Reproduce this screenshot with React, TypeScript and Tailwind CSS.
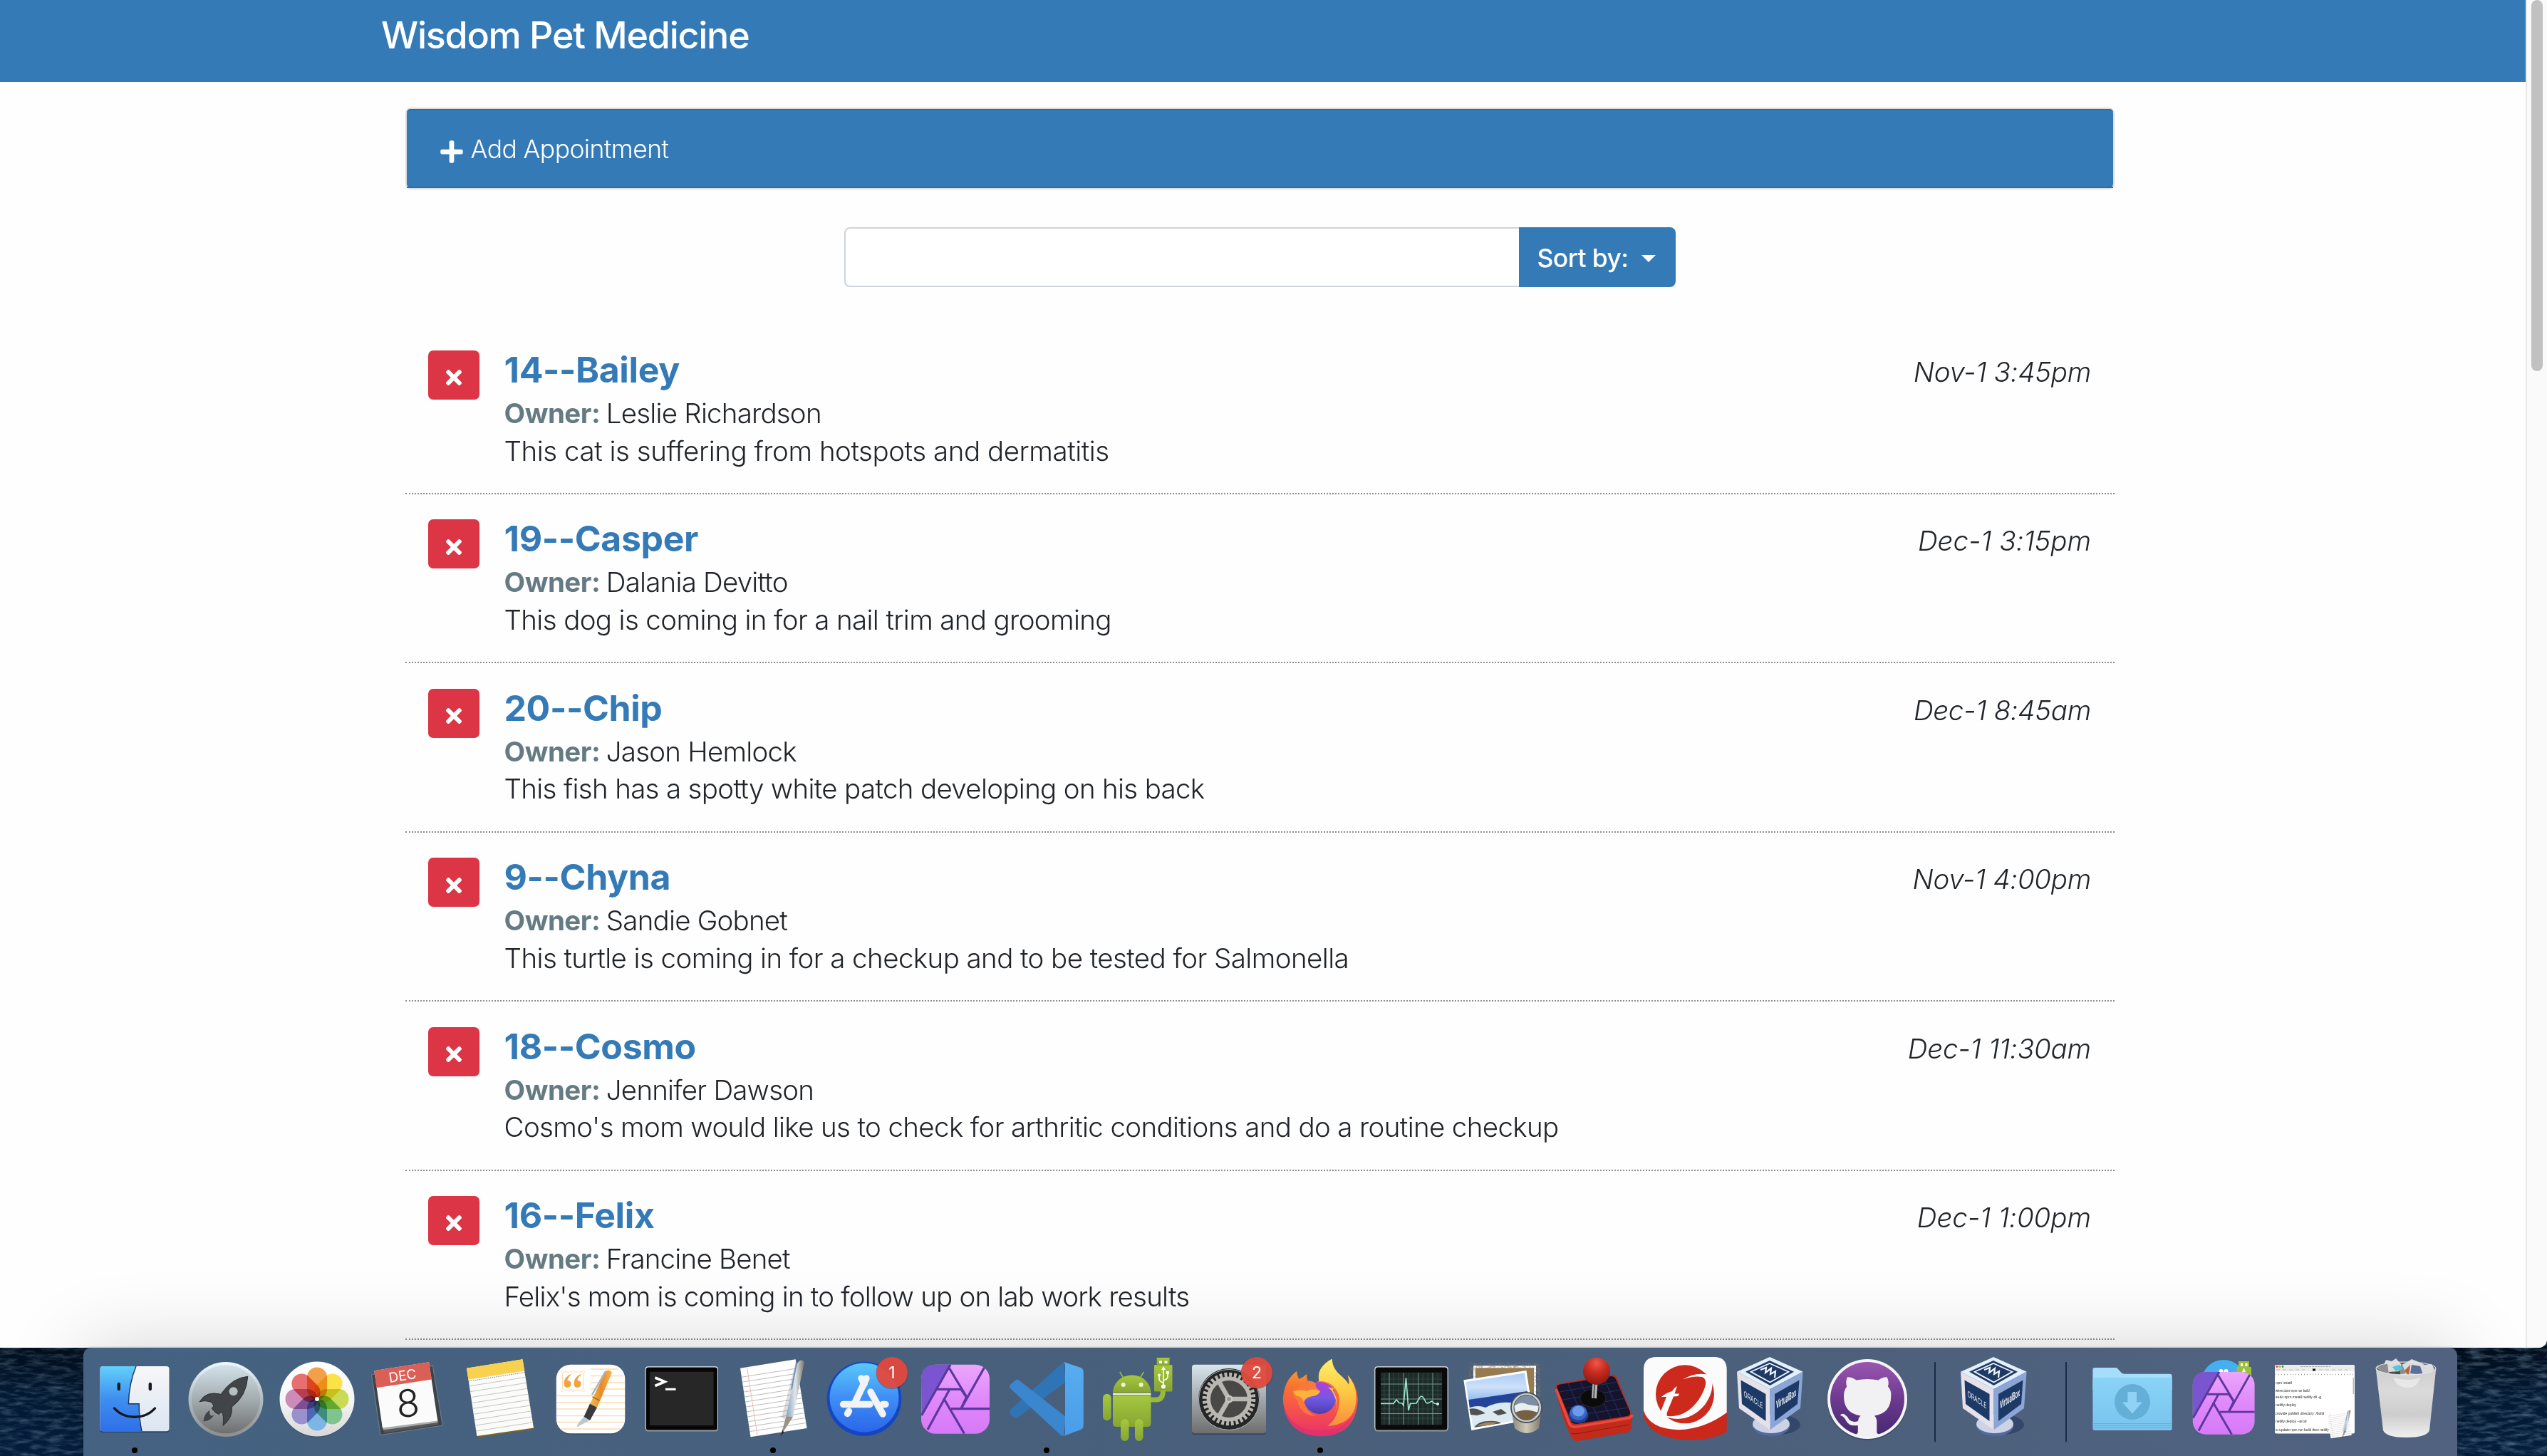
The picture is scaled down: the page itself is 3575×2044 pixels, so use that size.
import React from 'react';
import { FaPlus, FaTimes } from 'react-icons/fa';

type Appointment = { title: string; owner: string; notes: string; date: string; tracking: string; dateTracking: string };

const appointments: Appointment[] = [
  { title: '14--Bailey', owner: 'Leslie Richardson', notes: 'This cat is suffering from hotspots and dermatitis', date: 'Nov-1 3:45pm', tracking: 'tracking-[-0.46px]', dateTracking: 'tracking-[-0.3px]' },
  { title: '19--Casper', owner: 'Dalania Devitto', notes: 'This dog is coming in for a nail trim and grooming', date: 'Dec-1 3:15pm', tracking: 'tracking-[-0.64px]', dateTracking: 'tracking-[-0.05px]' },
  { title: '20--Chip', owner: 'Jason Hemlock', notes: 'This fish has a spotty white patch developing on his back', date: 'Dec-1 8:45am', tracking: 'tracking-[-0.68px]', dateTracking: 'tracking-[-0.3px]' },
  { title: '9--Chyna', owner: 'Sandie Gobnet', notes: 'This turtle is coming in for a checkup and to be tested for Salmonella', date: 'Nov-1 4:00pm', tracking: 'tracking-[-0.58px]', dateTracking: 'tracking-[-0.3px]' },
  { title: '18--Cosmo', owner: 'Jennifer Dawson', notes: "Cosmo's mom would like us to check for arthritic conditions and do a routine checkup", date: 'Dec-1 11:30am', tracking: 'tracking-[-0.64px]', dateTracking: 'tracking-[-0.2px]' },
  { title: '16--Felix', owner: 'Francine Benet', notes: "Felix's mom is coming in to follow up on lab work results", date: 'Dec-1 1:00pm', tracking: 'tracking-[-0.8px]', dateTracking: 'tracking-[-0.05px]' },
];

function AppointmentRow({ item }: { item: Appointment }) {
  return (
    <div className="flex h-[237.4px] shrink-0 items-start border-b-2 border-dotted border-[#8e8e8e] pr-[33px] pl-[32px]">
      <button className="mt-[35.4px] flex h-[69px] w-[71.5px] shrink-0 items-center justify-center rounded-[7px] bg-[#dc3545] text-white">
        <FaTimes className="mt-[8px] text-[32px]" />
      </button>
      <div className="ml-[35px] flex-1 pt-[31.4px] text-[#212529]">
        <div className="text-[50px] leading-[62px] font-bold tracking-[-0.4px] text-[#347ab7]">{item.title}</div>
        <div className="flex gap-[8.5px] text-[38.5px] leading-[61.6px] font-light">
          <span className="font-bold tracking-[-0.5px] text-[#657b83]">Owner:</span>
          <span className="tracking-[-0.8px]">{item.owner}</span>
        </div>
        <div className={`text-[38.5px] leading-[43.6px] font-light whitespace-nowrap ${item.tracking}`}>{item.notes}</div>
      </div>
      <div className={`pt-[34.4px] text-[38.5px] leading-[62px] font-light text-[#212529] italic ${item.dateTracking}`}>{item.date}</div>
    </div>
  );
}

function Cell({ children, running }: { children: React.ReactNode; running?: boolean }) {
  return (
    <svg className="h-[152px] w-[128px] shrink-0 overflow-visible" viewBox="0 0 128 152">
      {children}
      {running && <ellipse cx="64" cy="144" rx="4" ry="4" fill="#000" />}
    </svg>
  );
}

function Badge({ n }: { n: string }) {
  return (
    <g>
      <circle cx="103" cy="35.5" r="22.5" fill="#00000040" />
      <circle cx="103" cy="35" r="22" fill="#e24b3f" fillOpacity="0.95" />
      <text x="103" y="43" textAnchor="middle" fontSize="23" fill="#fff" fontFamily="Inter, sans-serif">{n}</text>
    </g>
  );
}

function Finder() {
  return (
    <Cell running>
      <rect x="15.5" y="27" width="97" height="92" rx="4" fill="#2b4260" />
      <rect x="15.5" y="26" width="97" height="91.3" rx="4" fill="url(#finderR)" />
      <path d="M19.5 26H66Q56 50 55.4 78.7H70.2Q70 98 74 117.3H19.5Q15.5 117.3 15.5 113V30Q15.5 26 19.5 26Z" fill="url(#finderL)" />
      <path d="M66 26Q56 50 55.4 78.7H70.2Q70 98 74 117.3" fill="none" stroke="#1d3350" strokeWidth="1.4" />
      <path d="M41.8 51V58M85.8 51V58" stroke="#1b1b1f" strokeWidth="4.4" strokeLinecap="round" />
      <path d="M35.5 85Q46 97 64 97.3Q82 97 92.5 85" fill="none" stroke="#16191f" strokeWidth="3.4" strokeLinecap="round" />
    </Cell>
  );
}

function Launchpad() {
  return (
    <Cell>
      <circle cx="64" cy="72.5" r="52.5" fill="url(#lpRim)" />
      <circle cx="64" cy="72.3" r="48" fill="url(#lp)" />
      <path d="M94.8 40.3Q73 42 57 65.3Q36 60 27 76Q36 73 44.5 77L47 82L44 85Q49 92 54 93.5L58 90Q62 95 60 109.5Q74 98 72.5 83Q93 68 94.8 40.3Z" fill="#424548" stroke="#2d3032" strokeWidth="1" />
      <circle cx="74.6" cy="61.3" r="6" fill="#b4c0c5" />
      <path d="M41.5 87.5Q33 93 32.6 103.5Q43 103 47.7 94L44 96Q40 94 41.5 87.5Z" fill="#424548" />
    </Cell>
  );
}

const petals = ['#f2a148', '#fbe24a', '#c9da55', '#7fc48c', '#7bb6e4', '#9a90cb', '#cb8cb8', '#e76f70'];

function Photos() {
  return (
    <Cell>
      <circle cx="64" cy="73.5" r="52.5" fill="#2c435e" opacity="0.5" />
      <circle cx="64" cy="72" r="52.5" fill="url(#photoBg)" />
      <g className="isolate">
        {petals.map((c, i) => (
          <rect key={c} x="50" y="27.5" width="28" height="45" rx="14" fill={c} transform={`rotate(${i * 45} 64 72)`} className="mix-blend-multiply" />
        ))}
      </g>
      <circle cx="64" cy="72" r="3" fill="#fff" />
    </Cell>
  );
}

function Calendar() {
  return (
    <Cell>
      <path d="M12.6 38L98.4 25.3L112.2 109L25 122.5Z" fill="#3c434a" stroke="#707a82" strokeWidth="1.2" />
      <path d="M28.2 112L105.3 102L106 108L30.5 119.5Z" fill="#55585a" />
      <path d="M27.5 108L105 98.5L105.5 105L28.8 115.5Z" fill="#a9abac" />
      <path d="M16.3 32.3L93 20.3L105.3 102.5L27.8 112.5Z" fill="#fbfbfb" />
      <path d="M16.3 32.3L93 20.3L97 44.5L19.3 56.3Z" fill="#da5f56" />
      <text x="56" y="46" textAnchor="middle" fontSize="19" fill="#fff" fontFamily="Inter, sans-serif" transform="rotate(-9 56 40)">DEC</text>
      <text x="63.5" y="97" textAnchor="middle" fontSize="53" fill="#222" fontWeight="300" fontFamily="Inter, sans-serif" transform="rotate(-4 63.5 78)">8</text>
    </Cell>
  );
}

const tilted = (t: number) => ({ x1: 18 + 14.4 * t, y1: 28.7 + 96.5 * t, x2: 96.5 + 15.5 * t, y2: 16.3 + 96.7 * t });

function PaperLines({ from, step, n, color }: { from: number; step: number; n: number; color: string }) {
  return (
    <g stroke={color} strokeWidth="1">
      {Array.from({ length: n }, (_, i) => <line key={i} {...tilted(from + i * step)} />)}
    </g>
  );
}

function Notes() {
  return (
    <Cell>
      <path d="M18.5 31L97 18L112.5 114.5L32.8 126Z" fill="#7a6420" />
      <path d="M18 28.7L96.5 16.3L112 112.5L32.4 124Z" fill="#fbfbfa" />
      <PaperLines from={0.26} step={0.082} n={9} color="#c4c4c4" />
      <path d="M18 28.7L96.5 16.3L99.3 32.5L20.5 44.7Z" fill="#f8d24f" />
      <path d="M21 47L99.5 34.5" stroke="#777" strokeWidth="1" strokeDasharray="1.5 1.5" />
    </Cell>
  );
}

function Pages() {
  return (
    <Cell>
      <rect x="15.8" y="25" width="96.5" height="97" rx="21" fill="#2c435e" opacity="0.5" />
      <rect x="15.8" y="23.7" width="96.5" height="96.6" rx="20" fill="#fff" />
      <g stroke="#fbdcae" strokeWidth="1.6">
        <path d="M64 30H103M64 39.5H110M64 49H112M64 58H112M16 67.5H112M16 77H112M16 86H112M16 95.5H112M17 104.5H111M22 114H106" />
        <rect x="24.5" y="34" width="29" height="26" fill="#fff" strokeWidth="1" />
        <g fill="#fff" strokeWidth="0.8">
          <circle cx="24.5" cy="34" r="2" /><circle cx="53.5" cy="34" r="2" /><circle cx="24.5" cy="60" r="2" /><circle cx="53.5" cy="60" r="2" /><circle cx="39" cy="34" r="1.8" /><circle cx="39" cy="60" r="1.8" />
        </g>
      </g>
      <g fill="#f0a440">
        <path d="M36.5 37Q26.5 41 26.5 50Q26.5 56 31.5 56Q36.5 55.5 36.5 50.5Q36.5 46 31.5 46Q32 41 36.5 38.5Z" />
        <path d="M50.5 37Q40.5 41 40.5 50Q40.5 56 45.5 56Q50.5 55.5 50.5 50.5Q50.5 46 45.5 46Q46 41 50.5 38.5Z" />
      </g>
      <path d="M54 108L96 44L60 98Z" fill="#00000022" />
      <path d="M85 33Q90 29 94 35L73 84L63 79Z" fill="url(#penO)" />
      <path d="M85 33L66 66" stroke="#9ab7cc" strokeWidth="2.4" />
      <path d="M63 78.5L73 84L63 102L54.5 97Z" fill="#3a3a3c" />
      <path d="M54.5 97L62.5 102L44.4 111.5L46 107Z" fill="#b9c8d2" />
      <path d="M66.5 69L76.5 74" stroke="#a86a1c" strokeWidth="1.5" />
    </Cell>
  );
}

function Terminal() {
  return (
    <Cell>
      <rect x="12.7" y="27" width="102.3" height="90.5" rx="4" fill="#8f989e" />
      <rect x="12.7" y="26.3" width="102.3" height="89" rx="4" fill="#e9eef0" />
      <rect x="13.7" y="27.6" width="100.3" height="88" rx="3.5" fill="#060606" />
      <rect x="19" y="33.7" width="89.6" height="75.5" fill="#272727" />
      <path d="M26.5 42L40 47.7L26.5 53.5" fill="none" stroke="#fff" strokeWidth="3.6" />
      <path d="M41 58.3H55.6" stroke="#fff" strokeWidth="3" />
    </Cell>
  );
}

function TextEditArt() {
  return (
    <g>
      <path d="M18 28.7L95.7 16.3L111.6 113L32.5 125.3Z" fill="#fff" />
      <PaperLines from={0.13} step={0.072} n={12} color="#bcbcbc" />
      <path d="M27.5 27.5L42 123" stroke="#f3b9b4" strokeWidth="1" />
      <path d="M96 20L107 20L87 104L76 98Z" fill="#00000022" />
      <path d="M98 22Q103 14 108 20L92 97L82.5 96Z" fill="url(#penS)" />
      <path d="M97 22L90 58" stroke="#6f96b8" strokeWidth="2" />
      <path d="M82.5 96L92 97L76.5 121L74.5 125Z" fill="#9a9188" />
      <path d="M77.5 115L74.5 125L79 119Z" fill="#222" />
    </g>
  );
}

function AppStore() {
  return (
    <Cell>
      <circle cx="64" cy="71.7" r="52.3" fill="#1446c4" />
      <circle cx="64" cy="70" r="48.5" fill="url(#appstore)" />
      <g stroke="#f2f3f5" strokeWidth="9.5" strokeLinecap="round" fill="none">
        <path d="M34.5 79.5H72M90 79.5H94" />
        <path d="M67 43L51 77" />
        <path d="M60 43L64 51" />
        <path d="M73 62L90 93" />
        <path d="M42.5 89L40.5 92.5" />
      </g>
      <Badge n="1" />
    </Cell>
  );
}

function AffinityArt() {
  return (
    <g>
      <rect x="16" y="23.7" width="96" height="97" rx="20" fill="url(#aff)" />
      <path d="M36 23.7H57L16.5 95L16 44Q16 23.7 36 23.7Z" fill="#7a55cf" />
      <g stroke="#5b379f" strokeWidth="3.2" fill="none">
        <path d="M57 23.7L16.5 95" />
        <path d="M55 28L80 69.5" />
        <path d="M104.5 28L72 85.5" />
        <path d="M38.5 58.3H72" />
        <path d="M56 58.3L25 115" />
        <path d="M47.5 71L76.5 120.5" />
        <path d="M58 85.7H112" />
        <path d="M72 58.3L79.5 69.5L72 85.5" />
      </g>
    </g>
  );
}

function VSCode() {
  return (
    <Cell running>
      <path d="M88 20L91 48L22 99Q18 100 12.5 92Q11 89 14 86Z" fill="#2f74b5" />
      <path d="M14 51L21.5 44.7Q24 44 27 47L91 97L88 124Q85 124 82 121L13 57Q11 54 14 51Z" fill="#3a86cf" />
      <path d="M88 20L112 28Q115.8 30 115.8 34V109Q115.8 113 112 115L88 124Q90 123 90 118V26Q90 22 88 20Z" fill="url(#vsc)" />
    </Cell>
  );
}

function AndroidArt() {
  return (
    <g>
      <g fill="url(#droid)">
        <path d="M29 63.5A26.7 25 0 0 1 82.5 63.5Z" />
        <path d="M29 66.5H82.5V106Q82.5 111 77.5 111H34Q29 111 29 106Z" />
        <rect x="15" y="64.7" width="11.6" height="37.5" rx="5.8" />
        <rect x="40" y="100" width="11.5" height="31" rx="5.7" />
        <rect x="60" y="100" width="11.5" height="31" rx="5.7" />
        <rect x="87" y="24" width="25.5" height="37.5" rx="1.5" />
        <path d="M90.7 14H108.6V25H90.7Z" />
      </g>
      <path d="M29 65H82.5" stroke="#f3f3f3" strokeWidth="2.2" />
      <path d="M82 73H90Q99.5 73 99.5 60" fill="none" stroke="#98b93a" strokeWidth="7" />
      <path d="M38.8 34L43.7 42M72.3 34L67.5 42" stroke="#9cbf3b" strokeWidth="1.6" />
      <circle cx="43.7" cy="52" r="3" fill="#eef3dc" />
      <circle cx="68.6" cy="52" r="3" fill="#eef3dc" />
      <path d="M94 18.5H98V22H94ZM101.5 18.5H105.5V22H101.5Z" fill="#fff" />
      <path d="M100 54V29M94 39V44Q94 47 100 49.5M106 36V41Q106 44 100 46" fill="none" stroke="#fff" strokeWidth="1.6" />
      <path d="M97 31L100 26L103 31Z" fill="#fff" />
      <circle cx="100" cy="54.5" r="3" fill="#fff" />
      <circle cx="94" cy="38.5" r="2" fill="#fff" />
      <rect x="104" y="33" width="4" height="4" fill="#fff" />
    </g>
  );
}

function Settings() {
  return (
    <Cell>
      <rect x="12" y="25" width="104" height="97" rx="4" fill="#24364c" opacity="0.6" />
      <rect x="12" y="23.7" width="104" height="96.6" rx="4" fill="url(#setBg)" />
      <circle cx="64" cy="72" r="43" fill="#262626" />
      <circle cx="64" cy="73" r="42.5" fill="none" stroke="#a9b4bd" strokeWidth="1" />
      <circle cx="64" cy="72" r="33.8" fill="none" stroke="#b9b5b0" strokeWidth="7" strokeDasharray="3.8 2.836" />
      <circle cx="64" cy="72" r="28.7" fill="#4a4846" stroke="#bab6b2" strokeWidth="5.5" />
      <g stroke="#bab6b2" strokeWidth="6.5">
        <path d="M64 72H91M64 72L50.5 48.6M64 72L50.5 95.4" />
      </g>
      <circle cx="64" cy="72" r="5.5" fill="#c9c6c3" />
      <circle cx="64" cy="72" r="3" fill="#9a9895" />
      <Badge n="2" />
    </Cell>
  );
}

function Firefox() {
  return (
    <Cell running>
      <path d="M31 33Q32 40 34 44Q40 42 45 37Q45 43 46.5 46.5Q54 47 58 50L62 46Q61 26 80.5 15.7Q81 30 94 40Q101 46 104.5 52Q105 44 102.5 38.5Q117 54 116.7 75Q113 124 64 124.3Q14 122 11.8 72Q13 46 31 33Z" fill="url(#ff)" />
      <path d="M12.5 80Q22 116 64 116.5Q98 116 112 92Q100 124 64 124.3Q18 122 12.5 80Z" fill="#e0306f" opacity="0.75" />
      <path d="M80.500 15.700Q58 28 62.500 47Q82 46 90 66Q93 80 86 96Q82 104 74 110Q106 108 113 84Q116.500 68 112 54Q108 44 102.500 38.500Q105 44 104.500 52Q101 46 94 40Q81 30 80.500 15.700Z" fill="url(#ffy)" />
      <circle cx="63.5" cy="70.5" r="22.5" fill="url(#globe)" />
      <path d="M42 48Q50 44 58 50Q56 55 64 61Q62 67 53 68Q44 69 41 76Q44 90 58 96Q36 94 32 74Q28 70 26 66Q30 58 42 48Z" fill="#f9793a" />
      <path d="M26 61Q36 58 45 61Q56 56 64 61.5Q61 67 53 68Q44 69 41 76Q38 68 32 68Q27 66 26 61Z" fill="#fdb23e" />
      <path d="M74 55L85 58Q81 57 82 60Q92 76 84 92Q90 80 84 68Q80 58 74 55Z" fill="#fcc13f" />
    </Cell>
  );
}

function Activity() {
  return (
    <Cell>
      <rect x="12.4" y="27" width="103.2" height="90.5" rx="4" fill="#8f989e" />
      <rect x="12.4" y="26.3" width="103.2" height="89" rx="4" fill="#e9eef0" />
      <rect x="13.4" y="27.6" width="101.2" height="88" rx="3.5" fill="#0a0a0a" />
      <rect x="21" y="34.7" width="86" height="73.6" fill="#1e2b28" />
      <path d="M26 35V108M39 35V108M46 35V108M60 35V108M67 35V108M80 35V108M87 35V108M101 35V108M21 44H107M21 60.5H107M21 66H107M21 86H107M21 99H107" stroke="#33504a" strokeWidth="0.7" />
      <path d="M33 35V108M53 35V108M73.5 35V108M94 35V108M21 51H107M21 72H107M21 92.5H107" stroke="#6f998d" strokeWidth="1" />
      <path d="M21 78.3H39L43 73L47 77.5L51 78L53 81L56.5 42.5L60 88L62.5 78.3L71 78L74 73Q78.5 63 83 74Q85 79 88 77.5L92.8 75L96 78L101 79" fill="none" stroke="#9be3cd" strokeWidth="1.7" />
      <circle cx="101" cy="79" r="2" fill="#cffbee" />
    </Cell>
  );
}

function Preview() {
  return (
    <Cell>
      <rect x="23" y="25.3" width="88" height="70" fill="#fff" />
      <rect x="26" y="28.3" width="82" height="64" fill="#9a7b4c" />
      <rect x="26" y="28.3" width="82" height="64" filter="url(#sand)" opacity="0.7" />
      <path d="M9.3 45.3L97.4 32L108 100L20.3 116Z" fill="#fff" />
      <path d="M12.3 48L95 35.5L99 62L16.5 75Z" fill="url(#sky)" />
      <path d="M16.3 73L98.8 61L101 76L18.5 90Z" fill="#24449a" />
      <path d="M18 84Q30 80 40 84Q60 74 80 78L101 74L104.5 98L22.5 112.5Z" fill="#dbe9f1" />
      <path d="M17.5 86Q26 84 33 88L40 92L28 95L19 94ZM24 112Q30 103 44 103Q56 102 62 106ZM50 90L62 86L70 92L58 95Z" fill="#51504f" />
      <path d="M28 110Q40 102 58 105L45 109Z" fill="#a3835b" />
      <path d="M76 86L81 113Q98 127 115 113L119 84Z" fill="url(#barrel)" />
      <ellipse cx="97.5" cy="84" rx="21.5" ry="21" fill="#c9ced2" stroke="#4c5054" strokeWidth="1.8" />
      <ellipse cx="97.5" cy="84" rx="17.5" ry="17.5" fill="#7c8fa2" stroke="#55595d" strokeWidth="1" />
      <path d="M80.5 82Q90 74 100 80L114.5 82Q114 87 113 90Q98 94 82 90Z" fill="#e9eef2" />
      <path d="M82 91Q96 84 113 91Q107 101 97.5 101.5Q87 101 82 91Z" fill="#75613f" />
    </Cell>
  );
}

function Joystick() {
  return (
    <Cell>
      <path d="M11 58Q9 52 16 50L90 38Q95 38 97 43L118 95L117 112Q116 118 110 119L42 131Q35 131 32 125Q16 90 11 58Z" fill="#c22a1c" />
      <path d="M11 58L30 107Q33 112 40 111L112 99Q117 98 118 94" fill="none" stroke="#ec4a3d" strokeWidth="3.5" />
      <path d="M32 120L38 121L114 108" fill="none" stroke="#8c180f" strokeWidth="0.9" />
      <path d="M12.5 56Q12 52 17 51.5L88 40Q93 40 95 44L115 90Q116 95 111 96L40 107Q34 107 32 103Z" fill="#16142c" />
      <path d="M16 62L98 48M21 73L103 59M26 85L108 71M31 96L113 84M28 50L52 105M45 47L72 102M62 44L88 99M78 42L102 97" stroke="#20356b" strokeWidth="0.9" />
      <ellipse cx="63" cy="71" rx="18" ry="12.5" fill="#0b0b0b" stroke="#262626" strokeWidth="1" />
      <path d="M64.5 71L66 48" stroke="#b5b5b5" strokeWidth="7" />
      <path d="M64 71L65.5 48" stroke="#5b5b5b" strokeWidth="2" />
      <circle cx="68" cy="33" r="19" fill="url(#ball)" />
      <ellipse cx="42.5" cy="95" rx="14" ry="10.5" fill="#1e3f92" />
      <ellipse cx="42.5" cy="91" rx="12" ry="10.5" fill="#3a66c8" />
      <ellipse cx="42.5" cy="89" rx="8.5" ry="7.5" fill="#6d9be8" />
    </Cell>
  );
}

function Trend() {
  return (
    <Cell>
      <path d="M6 84V95Q14 128 71 129.7Q104 129 122.7 118V84Z" fill="#c9281b" />
      <path d="M6 31Q6 13 24 13H105Q122.7 13 122.7 31V91Q92 114 55 115.3Q14 114 6 88Z" fill="#fbfbfb" />
      <circle cx="64" cy="65.3" r="41" fill="#cb2a1c" />
      <path d="M61 44.5Q78 34 95 37.5L101 44Q106 60 92 80Q70 106 40 98Q36 99 33 97L27 89L40 96Q66 98 84 72Q100 46 88 41Q76 39 61 44.5Z" fill="#fbfbfb" />
      <path d="M53 54Q49 56 46 61Q38 63 31 69H38L29 92L40 99Q37 94 40 88L48 68.5L54.5 68L56 64.5H49.5Z" fill="#fbfbfb" />
    </Cell>
  );
}

function VirtualBox() {
  return (
    <Cell>
      <ellipse cx="66" cy="108" rx="32" ry="14" fill="#142a55" opacity="0.45" />
      <ellipse cx="57" cy="110" rx="26" ry="14" fill="#54699f" />
      <ellipse cx="57" cy="107" rx="26" ry="13" fill="#cdd3e6" />
      <path d="M55 13L101.6 33.7L55.5 58L9 33.7Z" fill="#e3effa" />
      <path d="M9 33.7L55.5 58V115.3L12 85Z" fill="#e4e1ea" />
      <path d="M101.6 33.7L55.5 58V115.3L98 85Z" fill="#8ba5d6" />
      <path d="M55 18L89 33.7L55.5 53L21 33.7Z" fill="#1d3a66" />
      <path d="M55 22L81.5 33.8L55.5 48.5L28.5 33.8Z" fill="none" stroke="#f2f6fb" strokeWidth="1.8" />
      <path d="M42 31L50 28L49 35L57 29L56 37L63 33L62 42" fill="none" stroke="#f2f6fb" strokeWidth="2.2" />
      <path d="M14.5 45.5L49.5 65V103L16 79Z" fill="#1d3a66" />
      <path d="M96.5 45.5L62 65V103L94 79Z" fill="#1d3a66" />
      <text fontSize="11" fill="#e9eef5" textLength="42" lengthAdjust="spacingAndGlyphs" fontFamily="Inter, sans-serif" transform="matrix(0.640 0.420 0 1 18.500 68)">ORACLE</text>
      <text fontSize="15" fontWeight="700" fill="#e9eef5" textLength="44" lengthAdjust="spacingAndGlyphs" fontFamily="Inter, sans-serif" transform="matrix(0.640 -0.420 0 1 64 86)">VirtualBox</text>
    </Cell>
  );
}

function GitHub() {
  return (
    <Cell>
      <circle cx="64" cy="73" r="56.5" fill="#24364c" opacity="0.5" />
      <circle cx="64" cy="72" r="56" fill="#f5f5f5" />
      <circle cx="64" cy="72" r="52" fill="url(#gh)" />
      <path d="M36 41.3Q42 41 48.5 45.5Q64 42.5 79.5 45.5Q86 41 91.6 41.3Q95 48 93 54.7Q98 59 97.3 68Q97 92 74 95.5Q77.5 99 77.3 104V119Q78 121 81 122Q64 128 47 122Q50.5 121 50.8 118V109Q38 111 34 102Q31 96 25.9 95Q28 91.5 32 93.5Q36 96 38.5 101Q43 105.5 51 103Q51.5 98 54.4 95.5Q31 92 31 68Q31 59 35.2 54.7Q33 48 36 41.3Z" fill="#f1f0f2" />
    </Cell>
  );
}

function DownloadsFolder() {
  return (
    <Cell>
      <path d="M8.4 31Q8.4 28 11 28H40Q43 28 44 30L48.5 35Q50 36.7 53 36.7H116Q119.7 36.7 119.7 40V60H8.4Z" fill="#a5defa" />
      <path d="M8.4 45Q8.4 42 11.5 42H116.5Q119.7 42 119.7 45V113Q119.7 116 116.5 116H11.5Q8.4 116 8.4 113Z" fill="url(#folder)" />
      <path d="M8.4 106.5H119.7M8.4 109.5H119.7M8.4 112.5H119.7" stroke="#61aeda" strokeWidth="0.9" />
      <circle cx="64" cy="76" r="25" fill="#64afd8" />
      <path d="M57.5 62H70V76.5H78L64 92.5L50 76.5H57.5Z" fill="#8fd2f6" />
    </Cell>
  );
}

function AffinityStack() {
  return (
    <Cell>
      <circle cx="64" cy="48" r="31" fill="#45aff0" />
      <circle cx="60.5" cy="33" r="3" fill="#fff" /><circle cx="67.5" cy="33" r="3" fill="#fff" />
      <path d="M82.5 27H85V19H100V27H103V45H82.5Z" fill="#9dc03b" />
      <path d="M88 22H91V26H88ZM94.5 22H97.5V26H94.5ZM90 34L92.5 28L95 34Z" fill="#fff" />
      <g transform="translate(6.340 12.600) scale(0.904)"><AffinityArt /></g>
    </Cell>
  );
}

const noteLines: [number, string][] = [[50.5, 'npm install'], [62, 'when done npm run build'], [70.5, 'sudo npm install netlify-cli -g'], [82, 'netlify deploy'], [93.5, 'provide publish directory ./build'], [105, 'netlify deploy --prod'], [116.5, 'to update npm run build then netlify d']];

function NoteWindow() {
  return (
    <Cell>
      <rect x="8" y="24" width="112" height="96.5" rx="2" fill="#fff" />
      <rect x="8" y="24" width="112" height="9" rx="2" fill="#ececec" />
      <circle cx="11" cy="26.5" r="1.4" fill="#e0443e" /><circle cx="15" cy="26.5" r="1.4" fill="#dea123" /><circle cx="19" cy="26.5" r="1.4" fill="#1aab29" />
      <path d="M44 26.5H86" stroke="#a7a7a7" strokeWidth="1" strokeDasharray="3 1" />
      <path d="M10 31H50M70 31H110" stroke="#bdbdbd" strokeWidth="1" strokeDasharray="5 4" />
      <rect x="61" y="29.5" width="4" height="3" fill="#111" />
      <path d="M9 37.5H118" stroke="#999" strokeWidth="1.4" strokeDasharray="1 3" />
      <rect x="117.5" y="42" width="1.5" height="23" fill="#b9b9b9" />
      {noteLines.map(([y, s]) => (
        <text key={s} x="9" y={y} fontSize="5.600" fill="#222" textLength={s.length * 2.07} lengthAdjust="spacingAndGlyphs" fontFamily="Liberation Sans, sans-serif">{s}</text>
      ))}
      <g transform="translate(74.500 81) scale(0.370)"><TextEditArt /></g>
    </Cell>
  );
}

function Trash() {
  return (
    <Cell>
      <path d="M22 27L33 24L36 17L44 19L50 15L58 24L66 20L72 16L82 20L90 24L100 23L104 30L92 42L40 42Z" fill="#dcdcdc" />
      <path d="M24 27L38 22L40 38L30 36ZM58 22L64 36L52 38Z" fill="#8d8d8d" />
      <path d="M45 27L55 24L60 30L50 33Z" fill="#54c4d8" />
      <path d="M72 24L84 26L88 38L70 36Z" fill="#5b6f9a" />
      <path d="M62 32L70 24L68 40Z" fill="#b5643d" />
      <path d="M40 34L56 33L56 40L42 40Z" fill="#4e4a48" />
      <path d="M21.7 29Q30 38 64 38Q98 38 106.3 29L97 116Q94 126 64 126Q36 126 32 116Z" fill="url(#trash)" />
      <path d="M46 42Q70 48 84 42Q80 58 62 56Q50 54 46 42Z" fill="#f3f3f3" opacity="0.6" />
      <ellipse cx="64" cy="29" rx="42" ry="9" fill="none" stroke="#e9e9e9" strokeWidth="1.3" strokeOpacity="0.8" />
    </Cell>
  );
}

function Grad({ id, stops, horizontal }: { id: string; stops: string[]; horizontal?: boolean }) {
  return (
    <linearGradient id={id} x1="0" y1="0" x2={horizontal ? 1 : 0} y2={horizontal ? 0 : 1}>
      {stops.map((c, i) => <stop key={i} offset={i / (stops.length - 1)} stopColor={c} />)}
    </linearGradient>
  );
}

function SharedDefs() {
  return (
    <svg className="absolute h-0 w-0">
      <defs>
        <Grad id="finderL" stops={['#62d0fb', '#3f8ff0', '#2f6fe8']} />
        <Grad id="finderR" stops={['#f7f7f8', '#dbe5f2']} />
        <Grad id="lpRim" stops={['#eefaff', '#b0bcc2', '#8d8d8d']} />
        <Grad id="lp" stops={['#d2e2ea', '#a4adb0', '#6f6f6f']} />
        <Grad id="photoBg" stops={['#ffffff', '#f6f6f6', '#d8d8d8']} />
        <Grad id="penO" stops={['#f7c04e', '#e8892c', '#f7b548']} horizontal />
        <Grad id="penS" stops={['#7fa3bf', '#dfe6ec', '#7c7468']} horizontal />
        <Grad id="appstore" stops={['#5ac8fa', '#3f8ef5', '#2a66ea']} />
        <Grad id="aff" stops={['#eba6fb', '#e089fa', '#d679f8']} />
        <Grad id="vsc" stops={['#57aef0', '#4a9ce8']} />
        <Grad id="droid" stops={['#a6c83f', '#86a532']} />
        <Grad id="setBg" stops={['#d8e6ee', '#a4a8aa', '#6f6e6d']} />
        <Grad id="ff" stops={['#f9b13c', '#f9762f', '#f5504e', '#e8306a']} />
        <Grad id="ffy" stops={['#fff06a', '#fdc843', '#f98b3a']} />
        <Grad id="globe" stops={['#b33fd6', '#7558e6', '#4a3fae']} />
        <Grad id="sky" stops={['#a9cdf7', '#cde0f9', '#8db8ee']} />
        <Grad id="barrel" stops={['#8b8578', '#cfc9b8', '#7c7566']} horizontal />
        <Grad id="gh" stops={['#9a56b0', '#6d3a90', '#45286f']} />
        <Grad id="folder" stops={['#8ad3f7', '#78c4ef']} />
        <Grad id="trash" stops={['#cfcfcf', '#dadada', '#cdcdcd', '#f0f0f0']} />
        <radialGradient id="ball" cx="0.5" cy="0.2" r="0.9">
          <stop offset="0" stopColor="#f0564a" /><stop offset="0.4" stopColor="#c92c20" /><stop offset="1" stopColor="#7c140d" />
        </radialGradient>
        <filter id="sand">
          <feTurbulence type="fractalNoise" baseFrequency="0.350" numOctaves="2" seed="4" />
          <feColorMatrix values="0 0 0 0 0.250  0 0 0 0 0.200  0 0 0 0 0.120  2.500 0 0 0 -1" />
        </filter>
      </defs>
    </svg>
  );
}

function Ocean() {
  return (
    <svg className="absolute inset-x-0 bottom-0 h-[170px] w-full">
      <defs>
        <filter id="waves" x="0" y="0" width="100%" height="100%">
          <feTurbulence type="fractalNoise" baseFrequency="0.045 0.180" numOctaves="4" seed="7" />
          <feColorMatrix values="0 0 0 0 0.200  0 0 0 0 0.340  0 0 0 0 0.460  1.500 0 0 0 -0.620" />
        </filter>
        <Grad id="sea" stops={['#020b17', '#041a34', '#051e3d']} />
      </defs>
      <rect width="100%" height="100%" fill="url(#sea)" />
      <rect width="130" height="100%" filter="url(#waves)" opacity="0.6" />
      <rect x="3440" width="140" height="100%" filter="url(#waves)" opacity="0.75" />
    </svg>
  );
}

function DockDivider({ shift }: { shift: string }) {
  return (
    <div className="flex h-[152px] w-[58px] shrink-0 justify-center pt-[20px]">
      <div className={`h-[112px] w-[2px] bg-[#1a2c47] ${shift}`} />
    </div>
  );
}

export default function App() {
  return (
    <div className="relative flex h-[2044px] w-[3575px] flex-col overflow-hidden bg-[#04162c] font-['Inter',sans-serif]">
      <SharedDefs />
      <Ocean />

      <div className="relative flex h-[1892px] shrink-0 overflow-hidden rounded-br-[12px] bg-[#fefefe]">
        <main className="flex flex-1 flex-col">
          <header className="h-[115px] shrink-0 bg-[#347ab7] pl-[535px]">
            <h1 className="pt-[19.5px] text-[52px] leading-[60px] font-medium tracking-[-1.25px] text-white">Wisdom Pet Medicine</h1>
          </header>

          <div className="mt-[36px] ml-[569px] flex w-[2399px] flex-col">
            <div className="flex h-[115px] shrink-0 rounded-[8px] border-2 border-[#dcdddd] bg-[#347ab7]">
              <div className="flex flex-1 items-center rounded-t-[5px] border-y-2 border-[#2f6ea5] pl-[44.5px] text-white">
                <FaPlus className="mt-[8px] text-[36px]" />
                <span className="mt-[2px] ml-[9px] text-[35.5px] leading-[44px] font-light tracking-[-0.6px]">Add Appointment</span>
              </div>
            </div>

            <div className="mt-[53px] ml-[616px] flex h-[84px] w-[1166.5px] shrink-0">
              <input className="h-full min-w-0 flex-1 rounded-l-[8px] border-2 border-r-0 border-[#ced4da] bg-white outline-none" />
              <button className="flex h-full w-[220px] items-center rounded-r-[8px] bg-[#347ab7] pt-[3px] pl-[26px] text-[35.5px] font-medium tracking-[-0.6px] text-white">
                Sort by:
                <span className="ml-[19px] border-x-[10px] border-t-[10px] border-x-transparent border-t-white" />
              </button>
            </div>

            <div className="mt-[53.6px] flex flex-col">
              {appointments.map((a) => <AppointmentRow key={a.title} item={a} />)}
            </div>
          </div>
        </main>
        <aside className="w-[30px] shrink-0 border-l-2 border-[#e8e8e8] bg-[#fafafa] pl-[6px]">
          <div className="h-[521px] w-[16px] rounded-[8px] bg-[#c1c1c1]" />
        </aside>
      </div>

      <nav className="relative ml-[117px] flex h-[152px] w-[3332px] shrink-0 rounded-t-[11px] bg-linear-to-r from-[#456282] via-[#495f7a] to-[#50627f] px-[8px] shadow-[0_0_3px_rgba(0,0,0,0.35),0_0_110px_rgba(0,0,0,0.17)]">
        <Finder />
        <Launchpad />
        <Photos />
        <Calendar />
        <Notes />
        <Pages />
        <Terminal />
        <Cell running><TextEditArt /></Cell>
        <AppStore />
        <Cell><AffinityArt /></Cell>
        <VSCode />
        <Cell><AndroidArt /></Cell>
        <Settings />
        <Firefox />
        <Activity />
        <Preview />
        <Joystick />
        <Trend />
        <VirtualBox />
        <GitHub />
        <DockDivider shift="ml-[4px]" />
        <VirtualBox />
        <DockDivider shift="ml-0" />
        <DownloadsFolder />
        <AffinityStack />
        <NoteWindow />
        <Trash />
      </nav>
    </div>
  );
}
